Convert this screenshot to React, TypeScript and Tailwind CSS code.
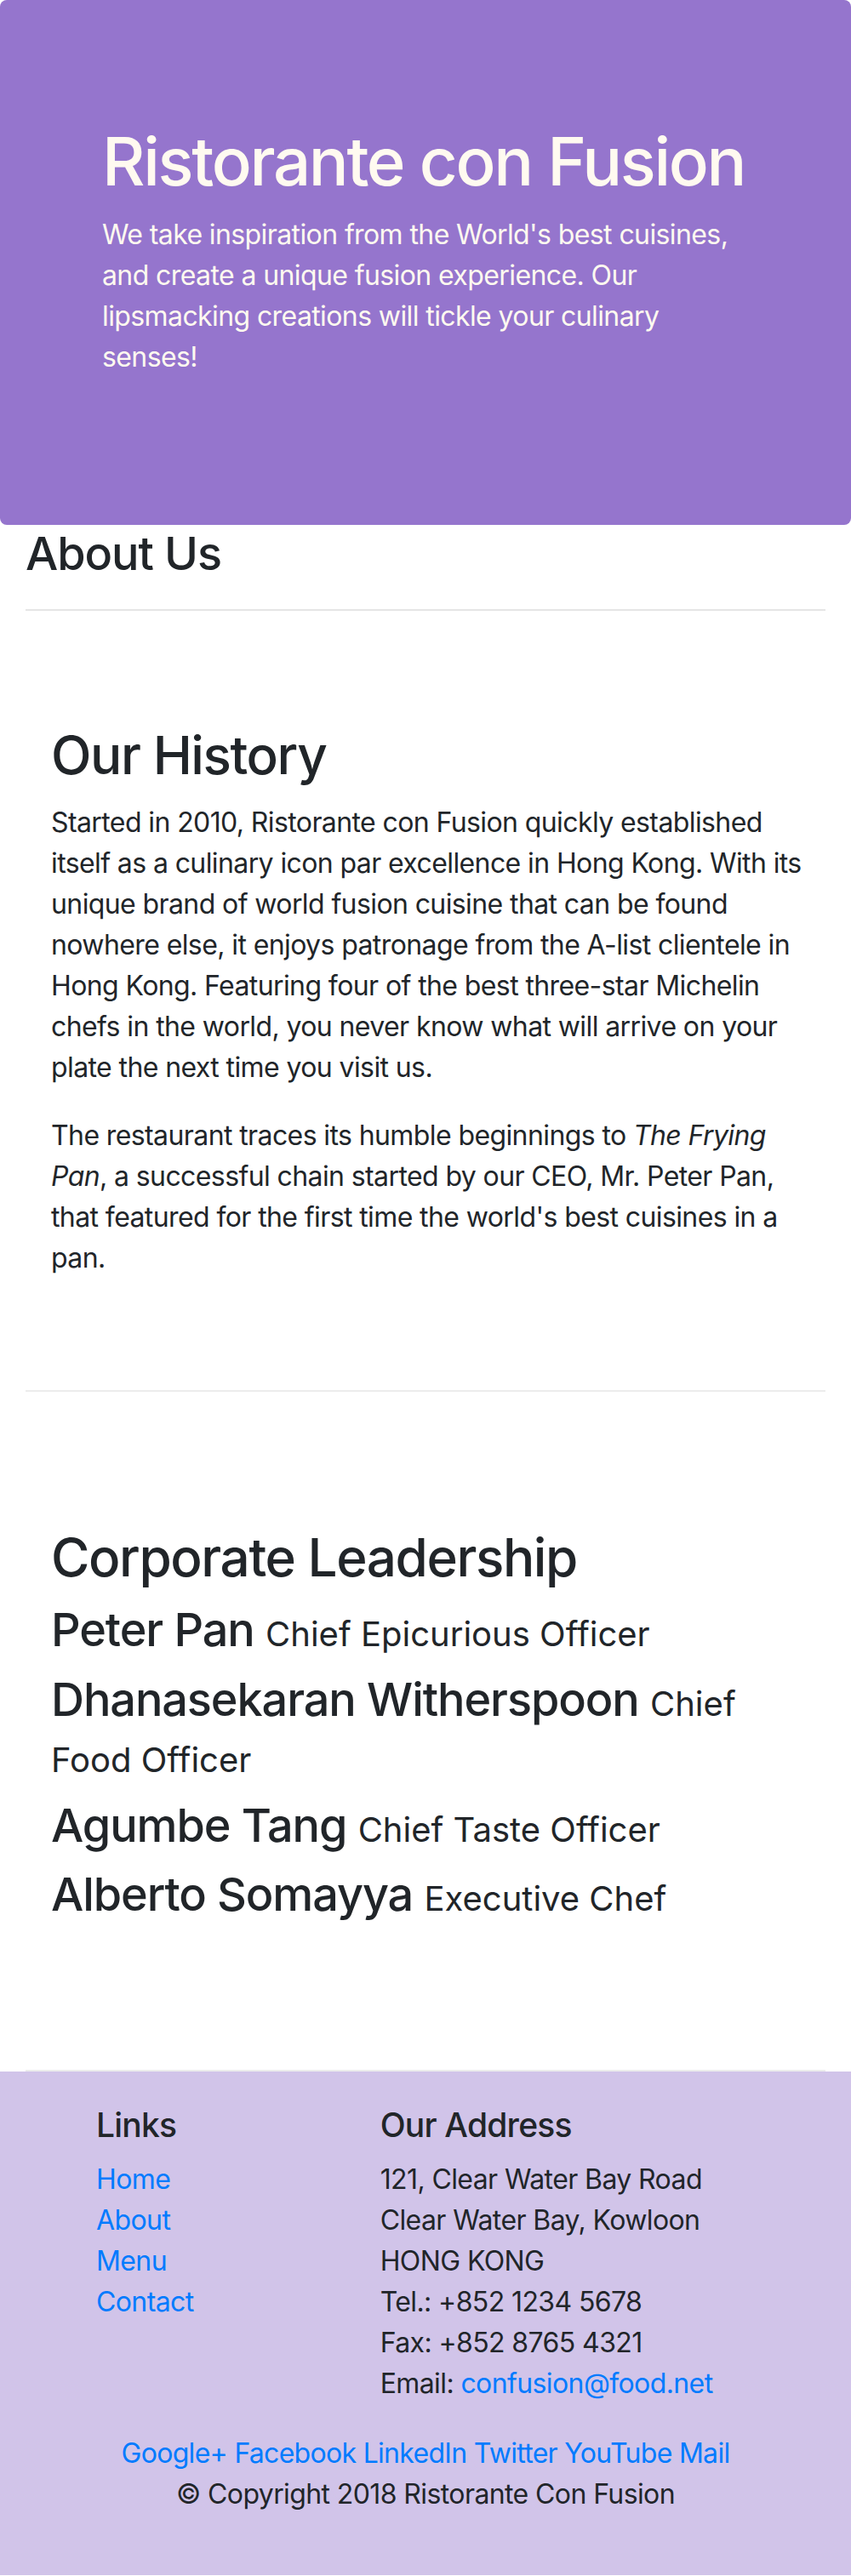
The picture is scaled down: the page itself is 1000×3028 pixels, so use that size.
import React from "react";

const leaders: { name: string; role: React.ReactNode }[] = [
  { name: "Peter Pan", role: "Chief Epicurious Officer" },
  {
    name: "Dhanasekaran Witherspoon",
    role: (
      <>
        Chief
        <br />
        Food Officer
      </>
    ),
  },
  { name: "Agumbe Tang", role: "Chief Taste Officer" },
  { name: "Alberto Somayya", role: "Executive Chef" },
];

export default function App() {
  return (
    <div className="min-h-[3028px] bg-white text-[#212529] font-['Inter','Noto_Sans',sans-serif]">
      <header className="rounded-[8px] bg-[#9575CD] text-[#FFFAF0] pt-[142px] pb-[173px] px-[120px]">
        <h1 className="text-[78px] leading-[96px] font-medium tracking-[-0.03em] mb-[14px] whitespace-nowrap">
          Ristorante con Fusion
        </h1>
        <p className="text-[32px] leading-[48px] tracking-[-0.6px] whitespace-nowrap">
          We take inspiration from the World's best cuisines,
          <br />
          and create a unique fusion experience. Our
          <br />
          lipsmacking creations will tickle your culinary
          <br />
          senses!
        </p>
      </header>

      <main className="px-[30px]">
        <div>
          <h3 className="text-[54px] leading-[67.2px] font-medium tracking-[-0.02em]">About Us</h3>
          <hr className="mt-[32px] mb-[32px] border-0 border-t-2 border-[#e5e5e5]" />
        </div>

        <section className="px-[30px] pt-[100px] pb-[99px] border-b-2 border-[#ececec]">
          <h2 className="text-[62px] leading-[76.8px] font-medium tracking-[-0.023em] mb-[16px]">Our History</h2>
          <p className="text-[32px] leading-[48px] tracking-[-0.6px] whitespace-nowrap mb-[32px]">
            Started in 2010, Ristorante con Fusion quickly established
            <br />
            itself as a culinary icon par excellence in Hong Kong. With its
            <br />
            unique brand of world fusion cuisine that can be found
            <br />
            nowhere else, it enjoys patronage from the A-list clientele in
            <br />
            Hong Kong. Featuring four of the best three-star Michelin
            <br />
            chefs in the world, you never know what will arrive on your
            <br />
            plate the next time you visit us.
          </p>
          <p className="text-[32px] leading-[48px] tracking-[-0.6px] whitespace-nowrap mb-[32px]">
            The restaurant traces its humble beginnings to <em>The Frying</em>
            <br />
            <em>Pan</em>, a successful chain started by our CEO, Mr. Peter Pan,
            <br />
            that featured for the first time the world's best cuisines in a
            <br />
            pan.
          </p>
        </section>

        <section className="px-[30px] pt-[157px] pb-[172.6px] border-b-2 border-[#ececec]">
          <h2 className="text-[62px] leading-[76.8px] font-medium tracking-[-0.023em] mb-[13.5px]">
            Corporate Leadership
          </h2>
          <ul className="flex flex-col gap-[15.7px]">
            {leaders.map((l) => (
              <li key={l.name}>
                <h3 className="text-[54px] leading-[66px] font-medium tracking-[-0.02em] whitespace-nowrap">
                  {l.name}{" "}
                  <span className="text-[40px] leading-[48px] font-normal tracking-normal">{l.role}</span>
                </h3>
              </li>
            ))}
          </ul>
        </section>
      </main>

      <footer className="bg-[#D1C4E9] pt-[39px] pb-[71px] text-[32px] leading-[48px] tracking-[-0.6px]">
        <div className="flex pl-[113px]">
          <div className="w-[333.67px]">
            <h5 className="text-[39px] leading-[48px] font-medium tracking-[-0.02em] mb-[16px]">Links</h5>
            <ul className="text-[#007bff]">
              <li>
                <a href="#">Home</a>
              </li>
              <li>
                <a href="#">About</a>
              </li>
              <li>
                <a href="#">Menu</a>
              </li>
              <li>
                <a href="#">Contact</a>
              </li>
            </ul>
          </div>
          <div className="flex-1">
            <h5 className="text-[39px] leading-[48px] font-medium tracking-[-0.02em] mb-[16px]">Our Address</h5>
            <address className="not-italic mb-[34px]">
              121, Clear Water Bay Road
              <br />
              Clear Water Bay, Kowloon
              <br />
              HONG KONG
              <br />
              Tel.: +852 1234 5678
              <br />
              Fax: +852 8765 4321
              <br />
              Email:{" "}
              <a href="#" className="text-[#007bff]">
                confusion@food.net
              </a>
            </address>
          </div>
        </div>
        <div className="text-center text-[#007bff] tracking-[-0.7px]">
          <a href="#">Google+</a> <a href="#">Facebook</a> <a href="#">LinkedIn</a> <a href="#">Twitter</a>{" "}
          <a href="#">YouTube</a> <a href="#">Mail</a>
        </div>
        <p className="text-center">© Copyright 2018 Ristorante Con Fusion</p>
      </footer>
    </div>
  );
}
